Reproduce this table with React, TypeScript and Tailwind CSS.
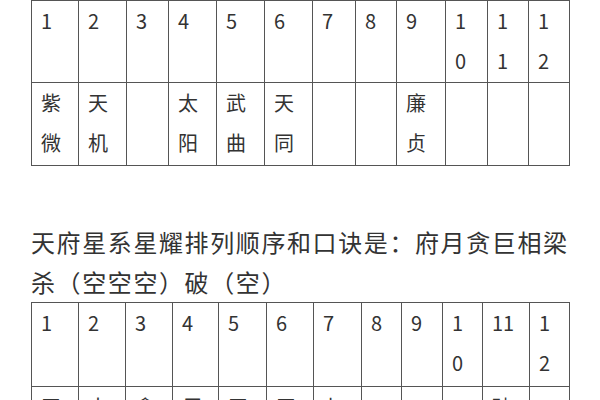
const FONT = '"Noto Sans CJK SC", "Noto Sans", sans-serif';

// Each column: [width in px, top cell lines, bottom cell lines]
type Col = [number, string[], string[]];

const ZIWEI: Col[] = [
  [47, ['1'], ['紫', '微']],
  [48, ['2'], ['天', '机']],
  [42, ['3'], []],
  [48, ['4'], ['太', '阳']],
  [48, ['5'], ['武', '曲']],
  [48, ['6'], ['天', '同']],
  [43, ['7'], []],
  [41, ['8'], []],
  [49, ['9'], ['廉', '贞']],
  [42, ['1', '0'], []],
  [41, ['1', '1'], []],
  [41, ['1', '2'], []],
];

const TIANFU: Col[] = [
  [47, ['1'], ['天', '府']],
  [47, ['2'], ['太', '阴']],
  [47, ['3'], ['贪', '狼']],
  [46, ['4'], ['巨', '门']],
  [48, ['5'], ['天', '相']],
  [47, ['6'], ['天', '梁']],
  [48, ['7'], ['七', '杀']],
  [40, ['8'], []],
  [41, ['9'], []],
  [40, ['1', '0'], []],
  [47, ['11'], ['破', '军']],
  [40, ['1', '2'], []],
];

function Cell({ lines, width, height }: { lines: string[]; width: number; height: string }) {
  return (
    <div
      className={`shrink-0 border-r border-b border-[#555555] pl-[9px] text-[20px] leading-[40px] text-[#333333] ${height}`}
      style={{ width }}
    >
      {lines.map((l, i) => (
        <div key={i}>{l}</div>
      ))}
    </div>
  );
}

function StarTable({ cols, topH, bottomH }: { cols: Col[]; topH: string; bottomH: string }) {
  return (
    <div className="ml-[31px] w-[539px] border-l border-t border-[#555555]">
      <div className="flex">
        {cols.map(([w, top], i) => (
          <Cell key={i} lines={top} width={w} height={topH} />
        ))}
      </div>
      <div className="flex">
        {cols.map(([w, , bottom], i) => (
          <Cell key={i} lines={bottom} width={w} height={bottomH} />
        ))}
      </div>
    </div>
  );
}

export default function App() {
  return (
    <div className="h-[400px] w-[600px] overflow-hidden bg-white" style={{ fontFamily: FONT }}>
      <StarTable cols={ZIWEI} topH="h-[82px]" bottomH="h-[83px]" />

      <div className="ml-[31px] mt-[56px] whitespace-nowrap text-[24px] leading-[40px] tracking-[1.6px] text-[#333333]">
        天府星系星耀排列顺序和口诀是：府月贪巨相梁
        <br />
        杀（空空空）破（空）
      </div>

      <StarTable cols={TIANFU} topH="h-[84px]" bottomH="h-[84px]" />
    </div>
  );
}
